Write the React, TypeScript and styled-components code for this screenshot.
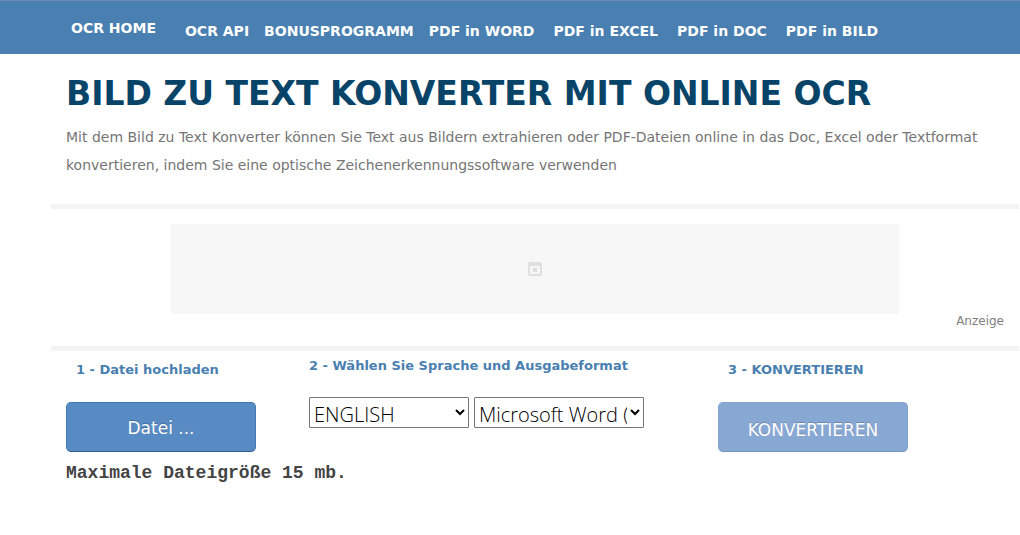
import React from 'react';
import styled, { createGlobalStyle } from 'styled-components';

const GlobalStyle = createGlobalStyle`
  *, *::before, *::after { box-sizing: border-box; }
  body {
    margin: 0;
    background: #fff;
    color: #757575;
    font-family: Verdana, "DejaVu Sans", sans-serif;
    font-size: 14px;
  }
`;

const TopBar = styled.header`
  display: flex;
  align-items: flex-start;
  min-height: 54px;
  padding: 17px 20px 0 71px;
  border-top: 1px solid #6f87b5;
  background: #4a7fb1;
`;

const NavLink = styled.a`
  color: #fff;
  font-size: 14px;
  font-weight: bold;
  line-height: 20px;
  text-decoration: none;
  white-space: nowrap;
`;

const NavList = styled.ul`
  display: flex;
  gap: 19px;
  margin: 0;
  padding: 3px 0 0 29px;
  list-style: none;
`;

const NavItem = styled.li<{ $tight?: boolean }>`
  margin-right: ${({ $tight }) => ($tight ? '-4px' : '0')};
`;

const Container = styled.main`
  margin: 0 1px 0 51px;
`;

const Intro = styled.section`
  padding: 17px 15px 25px;
`;

const Title = styled.h1`
  margin: 0;
  color: #084368;
  font-size: 33px;
  line-height: 46px;
`;

const Lead = styled.p`
  margin: 6px 0 0;
  font-size: 14px;
  line-height: 28px;
`;

const AdSection = styled.section`
  padding: 15px 15px 17px;
  border-top: 5px solid #f4f4f4;
  border-bottom: 5px solid #f4f4f4;
`;

const AdBox = styled.div`
  display: flex;
  align-items: center;
  justify-content: center;
  max-width: 728px;
  height: 90px;
  margin: 0 auto;
  background: #f7f7f7;
`;

const AdLabel = styled.p`
  margin: 0;
  color: #808080;
  font-size: 12px;
  line-height: 14px;
  padding-bottom: 1px;
  text-align: right;
`;

const Steps = styled.form`
  display: grid;
  grid-template-columns: minmax(0, 243fr) minmax(0, 409fr) minmax(0, 316fr);
`;

const Step = styled.div`
  padding: 5px 0 0 15px;
`;

const StepTitle = styled.h2<{ $inset?: boolean }>`
  margin: 0;
  padding: ${({ $inset }) => ($inset ? '4px 0 0 10px' : '0')};
  color: #4a7fb1;
  font-size: 13px;
  line-height: 20px;
`;

const ActionButton = styled.button`
  display: block;
  width: 190px;
  height: 50px;
  margin-top: 22px;
  padding: 2px 0 0;
  border: 1px solid #3f79b5;
  border-bottom-color: #2d5c8e;
  border-radius: 5px;
  background: #588bc3;
  color: #fff;
  font-family: inherit;
  font-size: 17px;
  text-shadow: 0 -1px 0 rgba(0, 0, 0, 0.2);

  &:disabled {
    padding-top: 6px;
    border-color: #84a5d2;
    border-bottom-color: #7394bb;
    background: #88a8d4;
  }
`;

const SizeNote = styled.p`
  margin: 10px 0 0;
  color: #444;
  font-family: "Courier New", "Liberation Mono", monospace;
  font-size: 18px;
  font-weight: bold;
  line-height: 22px;
  white-space: nowrap;
`;

const Selects = styled.div`
  display: flex;
  gap: 5px;
  margin-top: 21px;
`;

const Select = styled.select<{ $wide?: boolean }>`
  width: ${({ $wide }) => ($wide ? '170px' : '160px')};
  height: 31px;
  padding: 2px 0 0;
  border: 1px solid #767676;
  border-radius: 1px;
  background-color: #fff;
  color: #000;
  font-family: "Segoe UI", "Open Sans", sans-serif;
  font-size: 20px;
  font-weight: 300;
`;

const navigation = [
  { label: 'OCR API', tight: true },
  { label: 'BONUSPROGRAMM', tight: true },
  { label: 'PDF in WORD' },
  { label: 'PDF in EXCEL' },
  { label: 'PDF in DOC' },
  { label: 'PDF in BILD' },
];

function BlockedIcon() {
  return (
    <svg width="14" height="14" viewBox="0 0 14 14" fill="none" aria-hidden="true">
      <rect x="1" y="1" width="12" height="12" rx="1" stroke="#dfdfdf" strokeWidth="2" />
      <path d="M1 1h12v3H1z" fill="#dfdfdf" />
      <path d="m5 6 4 4m0-4-4 4" stroke="#d4d4d4" strokeWidth="1.2" />
    </svg>
  );
}

export default function App() {
  return (
    <>
      <GlobalStyle />
      <TopBar>
        <NavLink href="#home">OCR HOME</NavLink>
        <nav>
          <NavList>
            {navigation.map(({ label, tight }) => (
              <NavItem key={label} $tight={tight}>
                <NavLink href="#">{label}</NavLink>
              </NavItem>
            ))}
          </NavList>
        </nav>
      </TopBar>
      <Container>
        <Intro>
          <Title>BILD ZU TEXT KONVERTER MIT ONLINE OCR</Title>
          <Lead>
            Mit dem Bild zu Text Konverter können Sie Text aus Bildern extrahieren oder PDF-Dateien
            online in das Doc, Excel oder Textformat konvertieren, indem Sie eine optische
            Zeichenerkennungssoftware verwenden
          </Lead>
        </Intro>
        <AdSection>
          <AdBox>
            <BlockedIcon />
          </AdBox>
          <AdLabel>Anzeige</AdLabel>
        </AdSection>
        <Steps onSubmit={(event) => event.preventDefault()}>
          <Step>
            <StepTitle $inset>1 - Datei hochladen</StepTitle>
            <ActionButton type="button">Datei ...</ActionButton>
            <SizeNote>Maximale Dateigröße 15 mb.</SizeNote>
          </Step>
          <Step>
            <StepTitle>2 - Wählen Sie Sprache und Ausgabeformat</StepTitle>
            <Selects>
              <Select aria-label="Sprache" defaultValue="en">
                <option value="en">ENGLISH</option>
              </Select>
              <Select $wide aria-label="Ausgabeformat" defaultValue="docx">
                <option value="docx">Microsoft Word (docx)</option>
              </Select>
            </Selects>
          </Step>
          <Step>
            <StepTitle $inset>3 - KONVERTIEREN</StepTitle>
            <ActionButton type="submit" disabled>
              KONVERTIEREN
            </ActionButton>
          </Step>
        </Steps>
      </Container>
    </>
  );
}
